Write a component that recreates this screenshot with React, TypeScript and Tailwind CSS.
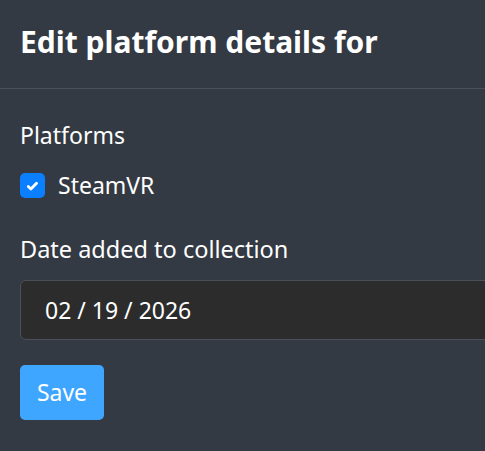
export default function App() {
  return (
    <div className="min-h-[451px] w-full overflow-hidden bg-[#343a43] text-white font-['Noto_Sans',sans-serif]">
      <div className="h-[89px] border-b border-[#4b5059] px-5 pb-[5px] flex items-center">
        <h5 className="text-[30px] font-bold leading-none whitespace-nowrap">Edit platform details for</h5>
      </div>
      <div className="px-5 pt-[31px]">
        <div className="text-[23px] leading-[30px]">Platforms</div>
        <label className="mt-[20px] flex items-center gap-[13px] text-[23px] leading-[30px]">
          <span className="flex h-[25px] w-[25px] items-center justify-center rounded-[5px] bg-[#0a7fff]">
            <svg width="15" height="15" viewBox="0 0 16 16" fill="none">
              <path d="M3.5 9l2.8 2.8 6-6.3" stroke="white" strokeWidth="3" strokeLinecap="round" strokeLinejoin="round" />
            </svg>
          </span>
          SteamVR
        </label>
        <div className="mt-[34px] text-[23.5px] leading-[30px]">Date added to collection</div>
        <div className="mt-[16px] w-[calc(100%+40px)] h-[60px] rounded-[6px] border border-[#4b5059] bg-[#2c2c2c] flex items-center px-6 text-[23px]">
          02 / 19 / 2026
        </div>
        <button className="mt-[25px] h-[55px] w-[84px] rounded-[5px] bg-[#3ea6ff] text-[23px] text-white">Save</button>
      </div>
    </div>
  );
}
